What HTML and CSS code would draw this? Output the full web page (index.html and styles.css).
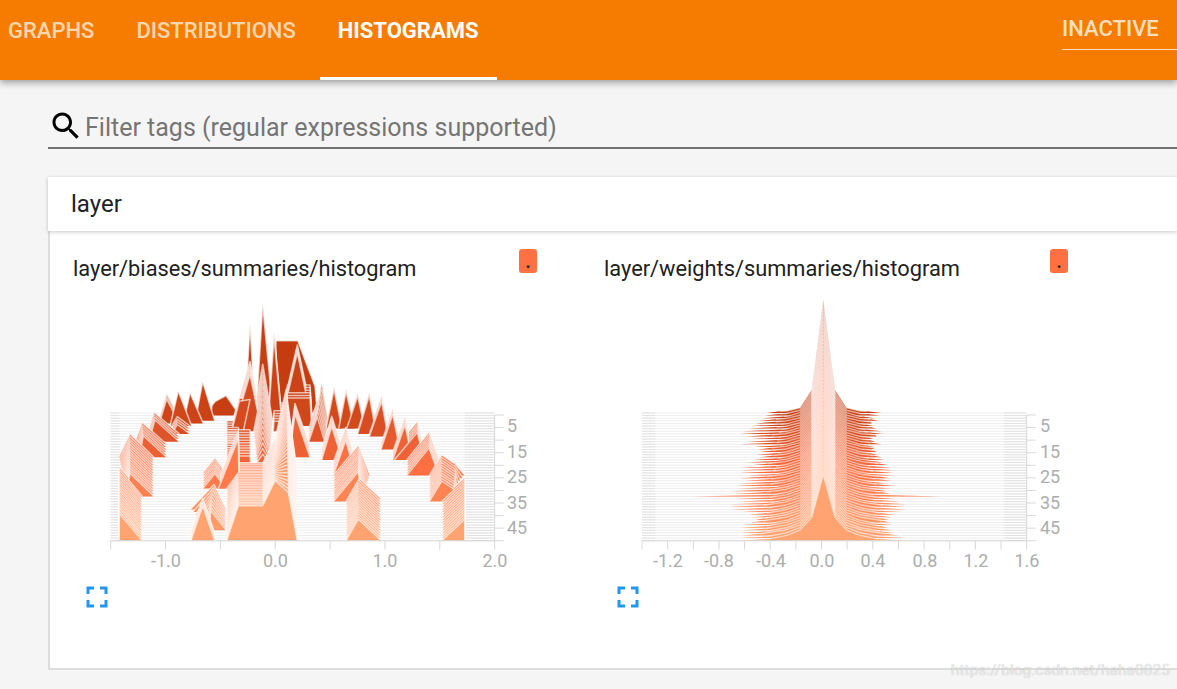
FILE: index.html
```html
<!DOCTYPE html>
<html lang="en">
<head>
    <meta charset="UTF-8">
    <title>TensorBoard</title>
    <link rel="stylesheet" href="styles.css">
</head>
<body>
    <header class="toolbar">
        <nav class="tabs">
            <a class="tab">GRAPHS</a>
            <a class="tab">DISTRIBUTIONS</a>
            <a class="tab active">HISTOGRAMS</a>
        </nav>
        <div class="run-state">INACTIVE</div>
    </header>

    <main class="content">
        <div class="search">
            <svg class="search-icon" viewBox="0 0 24 24"><path d="M15.5 14h-.79l-.28-.27C15.41 12.59 16 11.11 16 9.5 16 5.91 13.09 3 9.5 3S3 5.91 3 9.5 5.91 16 9.5 16c1.61 0 3.09-.59 4.23-1.57l.27.28v.79l5 4.99L20.49 19l-4.99-5zm-6 0C7.01 14 5 11.99 5 9.5S7.01 5 9.5 5 14 7.01 14 9.5 11.99 14 9.5 14z"/></svg>
            <span class="search-text">Filter tags (regular expressions supported)</span>
        </div>

        <section class="category">
            <h2 class="category-name">layer</h2>
            <div class="cards">
                <div class="card">
                    <div class="card-head">
                        <span class="card-title">layer/biases/summaries/histogram</span>
                        <span class="badge">.</span>
                    </div>
                    <svg class="chart" id="biases" viewBox="0 0 450 290">
                        <g class="ridges"></g>
                        <text x="76" y="277">-1.0</text>
                        <text x="185.5" y="277">0.0</text>
                        <text x="295" y="277">1.0</text>
                        <text x="405" y="277">2.0</text>
                        <text class="step" x="417" y="142">5</text>
                        <text class="step" x="417" y="168">15</text>
                        <text class="step" x="417" y="193">25</text>
                        <text class="step" x="417" y="219">35</text>
                        <text class="step" x="417" y="244">45</text>
                    </svg>
                    <svg class="expand" viewBox="0 0 24 24"><path d="M7 14H5v5h5v-2H7v-3zm-2-4h2V7h3V5H5v5zm12 7h-3v2h5v-5h-2v3zM14 5v2h3v3h2V5h-5z"/></svg>
                </div>
                <div class="card">
                    <div class="card-head">
                        <span class="card-title">layer/weights/summaries/histogram</span>
                        <span class="badge">.</span>
                    </div>
                    <svg class="chart" id="weights" viewBox="0 0 450 290">
                        <g class="ridges"></g>
                        <text x="47" y="277">-1.2</text>
                        <text x="98" y="277">-0.8</text>
                        <text x="150" y="277">-0.4</text>
                        <text x="201" y="277">0.0</text>
                        <text x="252" y="277">0.4</text>
                        <text x="304" y="277">0.8</text>
                        <text x="355" y="277">1.2</text>
                        <text x="406" y="277">1.6</text>
                        <text class="step" x="419" y="142">5</text>
                        <text class="step" x="419" y="168">15</text>
                        <text class="step" x="419" y="193">25</text>
                        <text class="step" x="419" y="219">35</text>
                        <text class="step" x="419" y="244">45</text>
                    </svg>
                    <svg class="expand" viewBox="0 0 24 24"><path d="M7 14H5v5h5v-2H7v-3zm-2-4h2V7h3V5H5v5zm12 7h-3v2h5v-5h-2v3zM14 5v2h3v3h2V5h-5z"/></svg>
                </div>
            </div>
        </section>
    </main>

    <div class="watermark">https://blog.csdn.net/haha0825</div>

    <script src="charts.js"></script>
</body>
</html>
```
FILE: styles.css
```css
html, body {
    height: 100%;
}

body {
    font-family: Roboto, "Liberation Sans", sans-serif;
    background-color: #f5f5f5;
    margin: 0;
    overflow: hidden;
    position: relative;
}

.toolbar {
    height: 80px;
    background-color: #f57c00;
    box-shadow: 0 3px 7px rgba(0, 0, 0, 0.35);
    display: flex;
    justify-content: space-between;
    color: #fff;
    font-size: 22px;
    font-weight: 500;
}

.tabs {
    display: flex;
    gap: 6px;
    margin-left: -10px;
}

.tab {
    padding: 18px 18px 0;
    box-sizing: border-box;
    height: 80px;
    color: rgba(255, 255, 255, 0.7);
}

.tab.active {
    color: #fff;
    font-weight: 700;
    border-bottom: 3px solid #fff;
}

.run-state {
    width: 115px;
    height: 50px;
    box-sizing: border-box;
    padding-top: 16px;
    color: rgba(255, 255, 255, 0.75);
    border-bottom: 1px solid rgba(255, 255, 255, 0.75);
}

.content {
    padding-left: 48px;
}

.search {
    height: 69px;
    box-sizing: border-box;
    display: flex;
    align-items: flex-end;
    border-bottom: 2px solid #737373;
}

.search-icon {
    width: 36px;
    height: 36px;
    flex: none;
    margin-bottom: 3px;
}

.search-text {
    font-size: 25px;
    color: #757575;
    line-height: 36px;
    margin-left: 1px;
    margin-bottom: 1px;
}

.category {
    margin-top: 28px;
}

.category-name {
    height: 54px;
    margin: 0;
    padding-left: 23px;
    background-color: #fff;
    box-shadow: 0 1px 4px rgba(0, 0, 0, 0.22);
    position: relative;
    font-size: 24px;
    font-weight: 400;
    line-height: 54px;
    color: #212121;
}

.cards {
    height: 437px;
    display: grid;
    grid-template-columns: 531px 531px;
    background-color: #fff;
    border-left: 2px solid #ddd;
    border-bottom: 2px solid #ddd;
}

.card-head {
    width: 464px;
    height: 59px;
    margin-left: 23px;
    padding-top: 18px;
    box-sizing: border-box;
    display: flex;
    justify-content: space-between;
    align-items: flex-start;
}

.card-title {
    font-size: 21.8px;
    line-height: 39px;
    color: #212121;
}

.badge {
    width: 18px;
    height: 24px;
    background-color: #ff7043;
    border-radius: 3px;
    font-size: 18px;
    line-height: 26px;
    font-weight: 700;
    text-align: center;
    color: #212121;
}

.chart {
    display: block;
    width: 450px;
    height: 290px;
    margin-left: 40px;
    font-size: 18px;
    fill: #adadad;
    text-anchor: middle;
}

.chart .step {
    text-anchor: start;
}

.ridges line {
    stroke: #eee;
}

.ridges line.end {
    stroke: #e2e2e2;
}

.ridges line.tick {
    stroke: #d8d8d8;
}

.ridges polyline {
    fill: none;
    stroke: rgba(255, 255, 255, 0.65);
    stroke-width: 1.5;
    stroke-linejoin: round;
}

#weights .ridges polyline {
    stroke: rgba(255, 255, 255, 0.55);
    stroke-width: 1.4;
}

.expand {
    display: block;
    width: 36px;
    height: 36px;
    margin: -1.5px 0 0 29px;
    fill: #2196f3;
}

.watermark {
    position: absolute;
    left: 951px;
    top: 661px;
    font-size: 15.5px;
    color: rgba(255, 255, 255, 0.7);
    text-shadow: 0 0 1px rgba(0, 0, 0, 0.3);
}
```
FILE: charts.js
```js
// ridge shapes are written in a 3x grid, y counted from the top of the chart box
const SVG_NS = "http://www.w3.org/2000/svg";
const TOP = 369, STEP = 7.82, STEPS = 50;

function tri(xl, xa, xr, h) {
    return [[xl, 0], [xa, h], [xr, 0]];
}

// same triangle pushed down from base y0 to base y1
function stack(y0, y1, xl, xa, xr, h) {
    return [y0, y1, tri(xl, xa, xr, h), null];
}

const biases = [
    // back row, left
    [378, 378, [[362, 0], [366, 30], [375, 42], [408, 60], [437, 18], [440, 0]], null],
    stack(395, 395, 316, 338, 374, 117),
    stack(400, 400, 280, 300, 340, 92),
    stack(405, 405, 240, 265, 305, 105),
    [405, 435, [[245, 0], [262, 28], [300, 0]], null],
    stack(385, 403, 208, 230, 268, 73),
    [432, 458, tri(173, 192, 268, 65), tri(176, 195, 268, 65)],
    [460, 503, tri(133, 157, 230, 65), tri(148, 160, 230, 65)],
    [505, 618, tri(86, 120, 192, 70), tri(108, 120, 192, 70)],
    [615, 750, [[88, 0], [88, 80], [122, 42], [157, 0]], null],
    // back row, right
    stack(400, 400, 672, 695, 716, 120),
    [405, 457, tri(656, 695, 716, 110), tri(656, 682, 704, 75)],
    stack(405, 413, 708, 732, 756, 118),
    stack(405, 413, 746, 768, 794, 110),
    stack(410, 418, 770, 803, 824, 97),
    stack(425, 433, 803, 838, 859, 115),
    stack(425, 438, 838, 875, 894, 105),
    stack(460, 478, 873, 908, 930, 105),
    stack(483, 508, 908, 945, 967, 105),
    stack(481, 511, 913, 982, 1002, 83),
    stack(511, 556, 950, 1017, 1047, 83),
    [557, 632, [[1018, 0], [1055, 62], [1095, 35], [1125, 0]], [[1018, 0], [1055, 62], [1095, 35], [1064, 0]]],
    [630, 750, [[1055, 0], [1124, 65], [1124, 0]], null],
    // inner ring, right
    stack(475, 512, 695, 725, 757, 100),
    stack(517, 557, 730, 767, 797, 105),
    [560, 632, tri(730, 805, 840, 90), tri(730, 805, 814, 90)],
    stack(630, 750, 768, 805, 874, 65),
    // inner ring, left
    stack(545, 592, 338, 375, 407, 45),
    [660, 722, tri(301, 372, 409, 75), tri(358, 362, 409, 60)],
    stack(730, 750, 303, 338, 374, 105),
    // centre, back to front
    [369, 369, [[555, 0], [558, 217], [623, 217], [675, 80], [682, 0]], null],
    stack(369, 369, 465, 480, 495, 264),
    stack(369, 378, 498, 518, 550, 329),
    stack(369, 395, 575, 622, 665, 204),
    [369, 409, [[590, 0], [592, 84], [660, 84], [665, 0]], null],
    stack(375, 395, 535, 552, 575, 250),
    stack(385, 420, 430, 480, 515, 170),
    [415, 420, [[425, 0], [448, 90], [480, 95], [460, 0]], null],
    [390, 515, tri(488, 518, 548, 170), tri(500, 518, 538, 25)],
    stack(470, 500, 598, 615, 660, 130),
    stack(520, 520, 535, 582, 590, 100),
    [340, 420, [[550, 0], [552, 30], [588, 30], [590, 0]], null],
    [440, 520, [[410, 0], [410, 20], [480, 20], [482, 0]], null],
    [575, 592, tri(385, 445, 447, 150), null],
    [400, 550, [[410, 0], [411, 8], [445, 8], [447, 0]], [[410, 0], [411, 28], [445, 28], [447, 0]]],
    [550, 750,
        [[410, 0], [445, 30], [518, 30], [555, 100], [588, 250], [622, 0]],
        [[410, 0], [445, 105], [518, 105], [555, 180], [595, 145], [622, 0]]]
];

// how far the thin tails of the weights reach at each step, left then right
const tailsLeft = [170, 175, 185, 195, 205, 215, 225, 240, 250, 230, 215, 225, 250, 205, 195, 190, 200, 190, 210, 230, 210, 250, 245, 250, 225, 250, 235, 250, 260, 255, 280, 270, 395, 265, 250, 280, 285, 275, 245, 225, 215, 205, 220, 245, 250, 240, 250, 245, 250, 250];
const tailsRight = [175, 170, 155, 165, 145, 150, 160, 175, 180, 160, 150, 155, 175, 150, 145, 160, 165, 175, 185, 180, 195, 205, 215, 210, 215, 200, 205, 190, 215, 205, 190, 200, 355, 215, 230, 250, 245, 250, 235, 215, 205, 195, 200, 210, 195, 205, 215, 225, 245, 250];

function weights(center) {
    const out = [];
    for (let s = 0; s < STEPS; s++) {
        const t = s / (STEPS - 1);
        const y = TOP + STEP * s;
        const mix = (a, b) => a + (b - a) * t;
        const jitter = 10 * Math.sin(s * 2.3) + 7 * Math.sin(s * 5.1);
        const mid = mix(16, 32), far = mix(6, 17);
        const spread = mix(130, 175) + jitter;
        const pts = [
            [center - tailsLeft[s], 0], [center - spread, 5], [center - 110 - jitter / 3, far],
            [center - 70, mid], [center - 35, 70], [center, mix(339, 198)],
            [center + 35, 70], [center + 70, mid], [center + 110 + jitter / 3, far],
            [center + spread, 5], [center + tailsRight[s], 0]
        ];
        out.push([y, y, pts, null]);
    }
    return out;
}

function lerp(a, b, t) {
    return Math.round(a + (b - a) * t);
}

function stepColor(s) {
    const t = s / (STEPS - 1);
    if (t < 0.5) {
        const u = t * 2;
        return `rgb(${lerp(196, 255, u)},${lerp(60, 112, u)},${lerp(16, 67, u)})`;
    }
    const u = t * 2 - 1;
    return `rgb(255,${lerp(112, 163, u)},${lerp(67, 112, u)})`;
}

function add(parent, name, attrs) {
    const el = document.createElementNS(SVG_NS, name);
    for (const key in attrs) el.setAttribute(key, attrs[key]);
    parent.appendChild(el);
    return el;
}

function addLine(group, x1, y1, x2, y2, cls) {
    return add(group, "line", { x1: x1, y1: y1, x2: x2, y2: y2, class: cls || "" });
}

function drawChart(id, blobs, opts) {
    const group = document.querySelector("#" + id + " .ridges");
    const px = (x) => x / 3 - opts.shift;

    for (let s = 0; s < STEPS; s++) {
        const y = TOP + STEP * s;
        const by = y / 3;
        addLine(group, px(opts.left), by, px(opts.right), by);
        addLine(group, px(opts.left), by, px(opts.innerLeft), by, "end");
        addLine(group, px(opts.innerRight), by, px(opts.right), by, "end");

        blobs.forEach(function (blob) {
            const first = Math.max(0, Math.round((blob[0] - TOP) / STEP));
            const last = Math.round((blob[1] - TOP) / STEP);
            if (s < first || s > last) return;
            const t = last === first ? 1 : (s - first) / (last - first);
            const a = blob[2], b = blob[3] || a;
            const pts = a.map(function (p, i) {
                const x = p[0] + (b[i][0] - p[0]) * t;
                const h = p[1] + (b[i][1] - p[1]) * t;
                return px(x).toFixed(1) + "," + ((y - h) / 3).toFixed(1);
            });
            add(group, "polygon", { points: pts.join(" "), fill: stepColor(s) });
            // only the top edge gets the pale outline, the tails stay saturated
            add(group, "polyline", { points: pts.slice(opts.trim, pts.length - opts.trim).join(" ") });
        });
    }

    // bottom axis
    const bottom = (TOP + STEP * 49) / 3;
    addLine(group, px(opts.left), bottom, px(opts.right), bottom, "tick");
    for (let i = 0; i <= opts.ticks; i++) {
        const x = px(opts.left + (opts.right - opts.left) * i / opts.ticks);
        addLine(group, x, bottom, x, bottom + 9, "tick");
    }
    // step axis on the right
    const rx = px(opts.right);
    addLine(group, rx, TOP / 3 + 2, rx, bottom, "tick");
    for (let i = 0; i <= 10; i++) {
        const ty = TOP / 3 + 2 + (bottom - TOP / 3 - 2) * i / 10;
        addLine(group, rx, ty, rx + 9, ty, "tick");
    }
}

drawChart("biases", biases, { shift: 0, trim: 0, left: 62, right: 1214, innerLeft: 88, innerRight: 1125, ticks: 7 });
drawChart("weights", weights(610), { shift: 1, trim: 1, left: 66, right: 1220, innerLeft: 105, innerRight: 1152, ticks: 15 });
```
